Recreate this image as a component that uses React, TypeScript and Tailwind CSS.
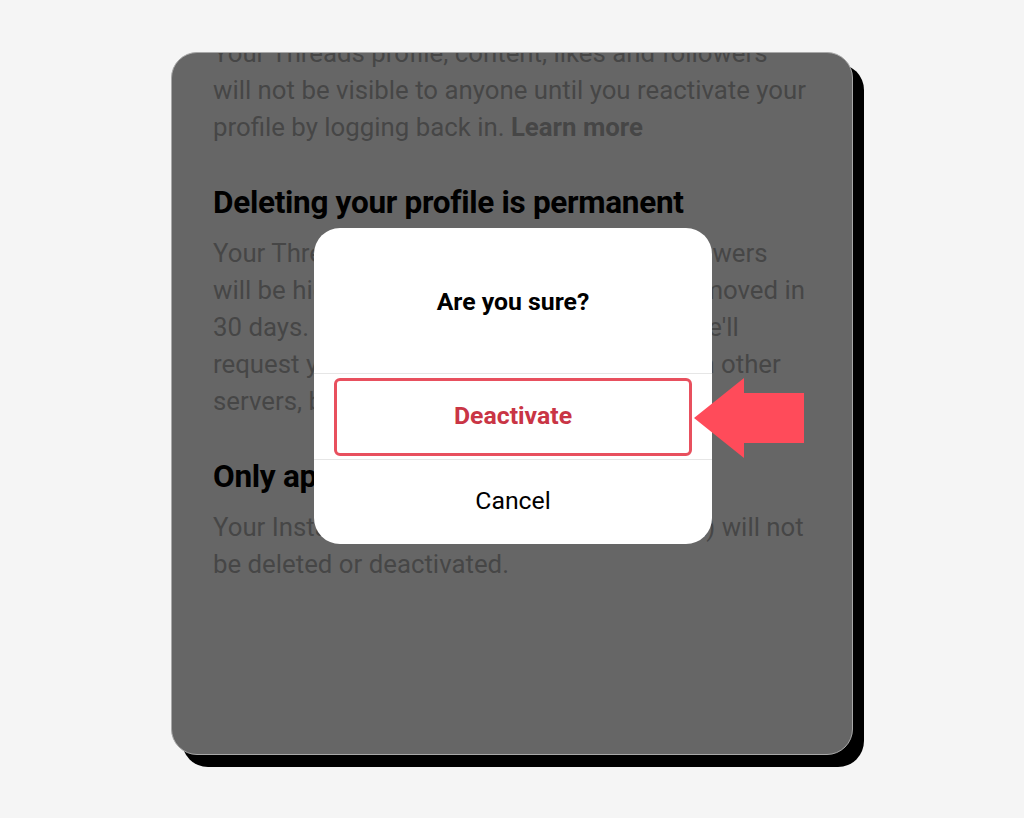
export default function App() {
  return (
    <div className="min-h-[818px] w-[1024px] bg-[#f5f5f5] pt-[52px] pl-[171px] font-['Roboto',sans-serif]">
      <div className="relative h-[703px] w-[682px] rounded-[26px] border border-[#a8a8a8] bg-[#666666] shadow-[11px_12px_0_0_#000]">
        <div className="h-full overflow-hidden rounded-[26px]">
          <div className="-mt-[18px] whitespace-nowrap pl-[41px] pr-[20px] text-[25.8px] leading-[37px] text-[#464646]">
            <p>
              Your Threads profile, content, likes and followers
              <br />
              will not be visible to anyone until you reactivate your
              <br />
              profile by logging back in. <span className="font-bold">Learn more</span>
            </p>
            <h2 className="mt-[37px] text-[31.5px] font-bold leading-[40px] tracking-[-0.3px] text-black">
              Deleting your profile is permanent
            </h2>
            <p className="mt-[12px]">
              Your Threads profile, content, likes and followers
              <br />
              will be hidden instantly and permanently removed in
              <br />
              30 days. If you've shared to the fediverse, we'll
              <br />
              request your profile content be deleted from other
              <br />
              servers, but we can't guarantee it.
            </p>
            <h2 className="mt-[37px] text-[31.5px] font-bold leading-[40px] tracking-[-0.3px] text-black">
              Only applies to your Threads profile
            </h2>
            <p className="mt-[12px]">
              Your Instagram account (and all its content) will not
              <br />
              be deleted or deactivated.
            </p>
          </div>
        </div>

        <div className="absolute left-[142px] top-[175px] flex h-[316px] w-[398px] flex-col overflow-hidden rounded-[26px] bg-white">
          <div className="flex h-[145px] items-center justify-center pt-[2px] text-[24.8px] font-bold text-black">
            Are you sure?
          </div>
          <div className="h-px bg-[#e6e6e6]" />
          <div className="flex h-[85px] flex-col px-[20px] pt-[4px] pb-[3px]">
            <div className="flex flex-1 items-center justify-center rounded-[6px] border-[3px] border-[#e8505e] pb-[2px] text-[24.8px] font-bold text-[#c93545]">
              Deactivate
            </div>
          </div>
          <div className="h-px bg-[#e6e6e6]" />
          <div className="flex flex-1 items-center justify-center pb-[2px] text-[24.8px] text-black">
            Cancel
          </div>
        </div>

        <svg
          className="absolute left-[522px] top-[325px]"
          width="110"
          height="80"
          viewBox="0 0 110 80"
        >
          <polygon points="0,40 50,0 50,15 110,15 110,65 50,65 50,80" fill="#ff4b5a" />
        </svg>
      </div>
    </div>
  );
}
